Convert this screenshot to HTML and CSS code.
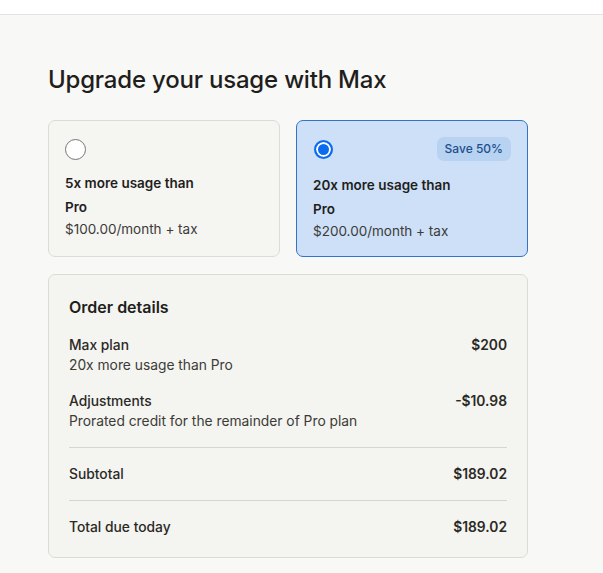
FILE: index.html
```html
<!DOCTYPE html>
<html lang="en">

<head>
  <meta charset="UTF-8">
  <meta name="viewport" content="width=device-width, initial-scale=1.0">
  <title>Upgrade to Max</title>
  <link rel="stylesheet" href="styles.css">
</head>

<body>
  <div class="topbar"></div>
  <main class="page">
    <h1 class="title">Upgrade your usage with Max</h1>

    <div class="plans">
      <label class="plan">
        <div class="planTop">
          <span class="radio"></span>
        </div>
        <div class="planName">5x more usage than<br>Pro</div>
        <div class="planPrice">$100.00/month + tax</div>
      </label>
      <label class="plan selected">
        <div class="planTop">
          <span class="radio"></span>
          <span class="badge">Save 50%</span>
        </div>
        <div class="planName">20x more usage than<br>Pro</div>
        <div class="planPrice">$200.00/month + tax</div>
      </label>
    </div>

    <section class="order">
      <h2>Order details</h2>
      <div class="row item">
        <div>
          <div class="label">Max plan</div>
          <div class="sub">20x more usage than Pro</div>
        </div>
        <div class="amount">$200</div>
      </div>
      <div class="row item">
        <div>
          <div class="label">Adjustments</div>
          <div class="sub">Prorated credit for the remainder of Pro plan</div>
        </div>
        <div class="amount">-$10.98</div>
      </div>
      <div class="row total">
        <div class="label">Subtotal</div>
        <div class="amount">$189.02</div>
      </div>
      <div class="row total">
        <div class="label">Total due today</div>
        <div class="amount">$189.02</div>
      </div>
    </section>
  </main>
</body>

</html>
```

FILE: styles.css
```css
body {
  margin: 0;
  font-family: Inter, 'Noto Sans', sans-serif;
  background-color: #f8f8f6;
  color: #1f1e1c;
}

.topbar {
  height: 14px;
  background-color: white;
  border-bottom: 1px solid #e3e3e0;
}

.page {
  width: 480px;
  padding: 50px 0 0 48px;
}

.title {
  font-size: 24px;
  font-weight: 500;
  letter-spacing: -0.2px;
  margin: 0 0 25px 0;
  line-height: 30px;
}

.plans {
  display: grid;
  grid-template-columns: 1fr 1fr;
  gap: 16px;
}

.plan {
  display: block;
  height: 137px;
  box-sizing: border-box;
  padding: 16px 16px 0 16px;
  border: 1px solid #dcdbd6;
  border-radius: 7px;
  background-color: #f5f5f2;
}

.plan.selected {
  background-color: #cde0f7;
  border-color: #3273cb;
}

.planTop {
  display: flex;
  justify-content: space-between;
  align-items: center;
  height: 24px;
}

.radio {
  width: 19px;
  height: 19px;
  border: 1px solid #767676;
  border-radius: 50%;
  background-color: white;
}

.selected .radio {
  width: 15px;
  height: 15px;
  border: 2px solid #0b6cf0;
  background-color: #0b6cf0;
  box-shadow: inset 0 0 0 2px white;
  margin-left: 1px;
}

.badge {
  font-size: 12px;
  font-weight: 500;
  color: #1d4f8c;
  background-color: #b8d2f1;
  border-radius: 7px;
  padding: 4px 8px;
  line-height: 16px;
}

.planName {
  font-size: 13.5px;
  font-weight: 600;
  line-height: 24px;
  margin-top: 10px;
}

.selected .planName {
  margin-top: 12px;
}

.planPrice {
  font-size: 13.5px;
  color: #3c3b37;
  line-height: 20px;
}

.order {
  margin-top: 17px;
  border: 1px solid #dcdbd6;
  border-radius: 7px;
  background-color: #f4f4f0;
  padding: 20px 20px 4px 20px;
}

.order h2 {
  font-size: 16px;
  font-weight: 600;
  margin: 0 0 16px 0;
  line-height: 24px;
}

.row {
  display: flex;
  justify-content: space-between;
  font-size: 13.8px;
}

.item {
  margin-bottom: 16px;
}

.item:nth-child(3) {
  padding-bottom: 16px;
  margin-bottom: 0;
  border-bottom: 1px solid #d6d5d0;
}

.label {
  font-weight: 500;
  line-height: 20px;
  color: #2a2926;
}

.sub {
  color: #3c3b37;
  line-height: 20px;
}

.amount {
  font-weight: 600;
  line-height: 20px;
  color: #2a2926;
}

.total {
  padding: 16px 0;
}

.total + .total {
  border-top: 1px solid #d6d5d0;
}
```
